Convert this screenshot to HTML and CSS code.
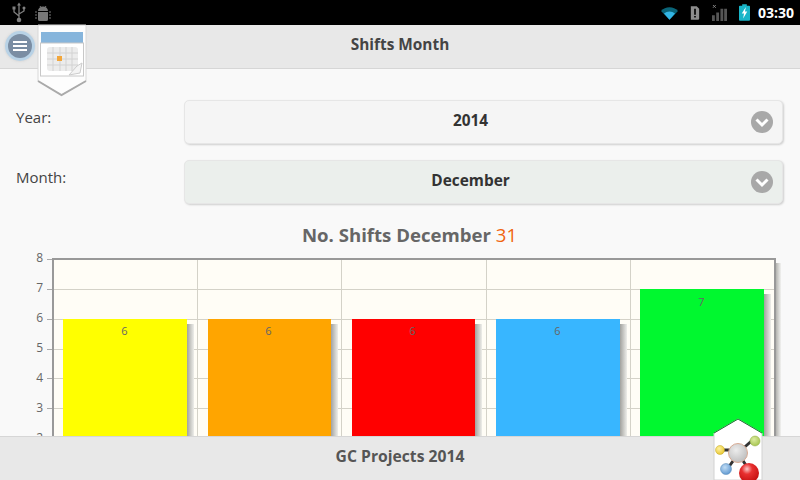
FILE: index.html
```html
<!DOCTYPE html>
<html lang="en">
<head>
<meta charset="utf-8">
<title>Shifts Month</title>
<link rel="stylesheet" href="styles.css">
</head>
<body>
<div class="screen">
  <div class="status">
    <div class="status-left">
      <svg class="ic" width="20" height="22" viewBox="0 0 20 22">
        <path class="usb-line" d="M10 3V17M10 14L5 10V7M10 12L15 9V7"/>
        <path class="usb-fill" d="M10 0.500l2 3H8zM3.500 4.500h3v3h-3zM15 4.500a1.500 1.500 0 1 1-.01 0z"/>
        <circle class="usb-fill" cx="10" cy="18" r="2.300"/>
      </svg>
      <svg class="ic" width="18" height="20" viewBox="0 0 18 20">
        <path class="droid" d="M4 8a5 4.500 0 0 1 10 0zM4 9h10v7.500a1.500 1.500 0 0 1-1.500 1.500h-7A1.500 1.500 0 0 1 4 16.500z"/>
        <path class="droid-line" d="M1 9h2M1 12h2M1 15h2M15 9h2M15 12h2M15 15h2M6 3l1 1.500M12 3l-1 1.500"/>
      </svg>
    </div>
    <div class="status-right">
      <svg width="17" height="14" viewBox="0 0 20 16">
        <path class="wifi-dim" d="M0 5.500A14 14 0 0 1 20 5.500L10 16z"/>
        <path class="wifi" d="M3.500 8.500A10 10 0 0 1 16.500 8.500L10 16z"/>
      </svg>
      <svg width="10" height="14" viewBox="0 0 12 16">
        <path class="alert" fill-rule="evenodd" d="M1 0h7l3 3v12a1 1 0 0 1-1 1H1zM5 3v7h2V3zM5 11.500v2h2v-2z"/>
      </svg>
      <svg width="15" height="17" viewBox="0 0 16 18">
        <path class="sig" d="M0 12h3v6H0zM4.500 9h3v9h-3zM9 5h3v13H9zM13 5h3v13h-3z"/>
        <path class="sig-x" d="M1 1l3 3M4 1L1 4"/>
      </svg>
      <svg width="11" height="17" viewBox="0 0 12 18">
        <path class="batt" d="M3.500 0h5v1.500H11a1 1 0 0 1 1 1V17a1 1 0 0 1-1 1H1a1 1 0 0 1-1-1V2.500a1 1 0 0 1 1-1h2.500z"/>
        <path class="bolt" d="M7.500 3L3 10h2.500L4.500 15.500 9 8H6.500z"/>
      </svg>
      <span class="clock">03:30</span>
    </div>
  </div>

  <header class="head">
    <span class="menu-btn"><span class="menu-bars"></span></span>
    <h1 class="head-title">Shifts Month</h1>
    <svg class="badge" width="50" height="72" viewBox="0 0 50 72">
      <path class="badge-body" d="M1 0H49V56L24.500 70 1 56z"/>
      <path class="badge-edge" d="M1 56L24.500 70 49 56"/>
      <rect class="cal-top" x="4" y="7" width="42" height="11"/>
      <rect class="cal-frame" x="3.500" y="18" width="43" height="33"/>
      <rect class="cal-sheet" x="10" y="22" width="31" height="24" rx="3"/>
      <path class="cal-grid" d="M16 22V46M23 22V46M29 22V46M35 22V46M10 28H41M10 34H41M10 40H41"/>
      <rect class="cal-day" x="20" y="31" width="5" height="5"/>
      <path class="cal-curl" d="M32 50L40 41 45 38 43 48z"/>
    </svg>
  </header>

  <main class="main">
    <div class="row">
      <label class="row-label">Year:</label>
      <div class="select">
        <span class="select-text">2014</span>
        <svg class="chev" width="22" height="22" viewBox="0 0 22 22"><circle class="chev-bg" cx="11" cy="11" r="11"/><path class="chev-mark" d="M5.500 8.500L11 14 16.500 8.500"/></svg>
      </div>
    </div>
    <div class="row">
      <label class="row-label">Month:</label>
      <div class="select select-active">
        <span class="select-text">December</span>
        <svg class="chev" width="22" height="22" viewBox="0 0 22 22"><circle class="chev-bg" cx="11" cy="11" r="11"/><path class="chev-mark" d="M5.500 8.500L11 14 16.500 8.500"/></svg>
      </div>
    </div>
    <h2 class="chart-title">No. Shifts December <span class="accent">31</span></h2>
    <svg class="chart" width="800" height="240" viewBox="0 -12 800 240">
      <defs>
        <linearGradient id="sh" x1="0" x2="1" y1="0" y2="0">
          <stop offset="0" stop-color="#a2a29e"/><stop offset="1" stop-color="#eeeeea"/>
        </linearGradient>
        <linearGradient id="shp" x1="0" x2="1" y1="0" y2="0">
          <stop offset="0" stop-color="#b4b4b0"/><stop offset="1" stop-color="#f2f2f0"/>
        </linearGradient>
      </defs>
      <rect x="776" y="5" width="5" height="220" fill="url(#shp)"/>
      <rect class="plot" x="53" y="1" width="722" height="228"/>
      <path class="grid" d="M53 31.500H775M53 61.500H775M53 91.500H775M53 120.500H775M53 150.500H775M53 180.500H775M197.500 1V228M341.500 1V228M486.500 1V228M630.500 1V228"/>
      <path class="tick" d="M47 1.500H53M47 31.500H53M47 61.500H53M47 91.500H53M47 120.500H53M47 150.500H53M47 180.500H53"/>
      <path class="axis" d="M53 0V228M52 1H775V228"/>
      <rect x="187" y="66" width="7" height="162" fill="url(#sh)"/>
      <rect x="331" y="66" width="7" height="162" fill="url(#sh)"/>
      <rect x="475" y="66" width="7" height="162" fill="url(#sh)"/>
      <rect x="620" y="66" width="7" height="162" fill="url(#sh)"/>
      <rect x="764" y="36" width="7" height="192" fill="url(#sh)"/>
      <rect class="bar-y" x="63" y="61" width="124" height="167"/>
      <rect class="bar-o" x="208" y="61" width="123" height="167"/>
      <rect class="bar-r" x="352" y="61" width="123" height="167"/>
      <rect class="bar-b" x="496" y="61" width="124" height="167"/>
      <rect class="bar-g" x="640" y="31" width="124" height="197"/>
      <g class="val">
        <text x="124.500" y="77">6</text><text x="268.500" y="77">6</text><text x="412.500" y="77">6</text><text x="557.500" y="77">6</text><text x="701.500" y="48">7</text>
      </g>
      <g class="ylab">
        <text x="43" y="4">8</text><text x="43" y="34">7</text><text x="43" y="64">6</text><text x="43" y="94">5</text><text x="43" y="124">4</text><text x="43" y="154">3</text><text x="43" y="184">2</text>
      </g>
    </svg>
  </main>

  <footer class="foot">GC Projects 2014</footer>

  <svg class="mol" width="52" height="62" viewBox="0 0 52 62">
    <defs>
      <radialGradient id="gy" cx="0.4" cy="0.35" r="0.7"><stop offset="0" stop-color="#fff2a0"/><stop offset="1" stop-color="#e8c42a"/></radialGradient>
      <radialGradient id="gg" cx="0.4" cy="0.35" r="0.7"><stop offset="0" stop-color="#dcebA0"/><stop offset="1" stop-color="#a4c44c"/></radialGradient>
      <radialGradient id="gb" cx="0.4" cy="0.35" r="0.7"><stop offset="0" stop-color="#c0dcf4"/><stop offset="1" stop-color="#5c96d0"/></radialGradient>
      <radialGradient id="gc" cx="0.4" cy="0.35" r="0.7"><stop offset="0" stop-color="#ececec"/><stop offset="1" stop-color="#bcbcbc"/></radialGradient>
      <radialGradient id="gr" cx="0.4" cy="0.3" r="0.75"><stop offset="0" stop-color="#fbc8c8"/><stop offset="0.35" stop-color="#e83030"/><stop offset="1" stop-color="#c00c0c"/></radialGradient>
    </defs>
    <path class="mol-body" d="M1 62V15L25 1 49 15V62z"/>
    <path class="mol-top" d="M1 15L25 1 49 15"/>
    <path class="mol-bond" d="M10 32H25M15 50L25 36M25 35L43 19M25 35L36 52"/>
    <circle class="m-y" cx="7" cy="32" r="4.500"/>
    <circle class="m-g" cx="42" cy="23" r="5"/>
    <circle class="m-b" cx="13" cy="51" r="5.500"/>
    <circle class="m-c" cx="25" cy="35" r="9.500"/>
    <circle class="m-r" cx="36" cy="55" r="10"/>
  </svg>
</div>
</body>
</html>
```
FILE: styles.css
```css
* { box-sizing: border-box; }
html, body { margin: 0; padding: 0; }
body { width: 800px; height: 480px; overflow: hidden; font-family: "Open Sans", "Noto Sans", sans-serif; }
.screen { position: relative; width: 800px; height: 480px; display: flex; flex-direction: column; background: #f9f9f9; }

.status { flex: 0 0 25px; background: #000; display: flex; justify-content: space-between; align-items: center; padding: 0 6px 0 9px; }
.status-left { display: flex; align-items: center; gap: 5px; }
.status-right { display: flex; align-items: center; gap: 12px; }
.clock { color: #fff; font: bold 14px "Open Sans", sans-serif; margin-left: -4px; }
.usb-line { fill: none; stroke: #808080; stroke-width: 1.300; }
.usb-fill { fill: #808080; }
.droid { fill: #777; }
.droid-line { fill: none; stroke: #777; stroke-width: 1; }
.wifi-dim { fill: #0a6478; }
.wifi { fill: #33b5e5; }
.alert { fill: #8c8c8c; }
.sig { fill: #555; }
.sig-x { fill: none; stroke: #888; stroke-width: 1; }
.batt { fill: #19b5c8; }
.bolt { fill: #fff; }

.head { flex: 0 0 44px; background: #e8e8e8; border-bottom: 1px solid #d6d6d6; display: flex; align-items: center; justify-content: center; padding-bottom: 4px; position: relative; }
.head-title { margin: 0; font-size: 15.400px; font-weight: 700; color: #444; }
.menu-btn { position: absolute; left: 8px; top: 9px; width: 24px; height: 24px; border-radius: 50%; background: #7a8da3; box-shadow: 0 0 0 3px #b8d2e6, 0 0 2px 4px #dcdcdc; display: flex; align-items: center; justify-content: center; }
.menu-bars { width: 14px; height: 10px; border-top: 2px solid #fff; border-bottom: 2px solid #fff; position: relative; }
.menu-bars::after { content: ""; position: absolute; left: 0; right: 0; top: 2px; height: 2px; background: #fff; }
.badge { position: absolute; left: 37px; top: 0; overflow: visible; }
.badge-body { fill: #fdfdfd; stroke: #d8d8d8; stroke-width: 1; }
.badge-edge { fill: none; stroke: #aaa; stroke-width: 2; }
.cal-top { fill: #86b5dc; }
.cal-frame { fill: #fff; stroke: #c8c8c8; stroke-width: 1; }
.cal-sheet { fill: #ececec; }
.cal-grid { fill: none; stroke: #d2d2d2; stroke-width: 1; }
.cal-day { fill: #f2a63b; }
.cal-curl { fill: #f4f4f4; stroke: #ccc; stroke-width: 1; }

.main { flex: 1 1 auto; min-height: 0; overflow: hidden; display: flex; flex-direction: column; padding-top: 31px; }
.row { display: flex; flex: 0 0 44px; margin-bottom: 16px; padding: 0 17px 0 16px; }
.row-label { flex: 0 0 168px; font-size: 15px; line-height: 20px; color: #444; padding-top: 7px; }
.select { flex: 1 1 auto; height: 44px; background: #f5f5f5; border: 1px solid #e6e6e6; border-radius: 5px; box-shadow: 1px 1px 2px #cfcfcf; display: flex; align-items: center; justify-content: center; padding: 0 26px 3px 0; position: relative; }
.select-active { background: #ebefec; }
.select-text { font-size: 15.400px; font-weight: 700; color: #333; }
.chev { position: absolute; right: 9px; top: 10px; }
.chev-bg { fill: #a8a8a8; }
.chev-mark { fill: none; stroke: #fff; stroke-width: 3; }

.chart-title { margin: 3px 0 0; padding-left: 19px; text-align: center; font-size: 18.600px; line-height: 23px; font-weight: 700; color: #666; flex: 0 0 auto; }
.accent { color: #f0640f; font-weight: 400; }
.chart { flex: 0 0 240px; display: block; }
.plot { fill: #fffdf6; }
.grid { fill: none; stroke: #d4d2c8; stroke-width: 1; }
.tick { fill: none; stroke: #aaa; stroke-width: 1; }
.axis { fill: none; stroke: #999; stroke-width: 2; }
.bar-y { fill: #ffff00; }
.bar-o { fill: #ffa500; }
.bar-r { fill: #ff0000; }
.bar-b { fill: #38b6ff; }
.bar-g { fill: #00f82f; }
.val text { font: 11px "Open Sans", sans-serif; fill: #666; text-anchor: middle; }
.ylab text { font: 12px "Open Sans", sans-serif; fill: #666; text-anchor: end; }

.foot { flex: 0 0 44px; background: #e8e8e8; border-top: 1px solid #d6d6d6; display: flex; align-items: center; justify-content: center; padding-bottom: 5px; font-size: 15.700px; font-weight: 700; color: #555; }
.mol { position: absolute; left: 713px; top: 418px; }
.mol-body { fill: #fff; stroke: #d2d2d2; stroke-width: 1; }
.mol-top { fill: none; stroke: #1a7a30; stroke-width: 1; }
.mol-bond { fill: none; stroke: #333; stroke-width: 3; }
.m-y { fill: url(#gy); stroke: #c0a92e; stroke-width: 0.500; }
.m-g { fill: url(#gg); stroke: #95ad49; stroke-width: 0.500; }
.m-b { fill: url(#gb); stroke: #5286b5; stroke-width: 0.500; }
.m-c { fill: url(#gc); stroke: #d8ab94; stroke-width: 1; }
.m-r { fill: url(#gr); }
```
